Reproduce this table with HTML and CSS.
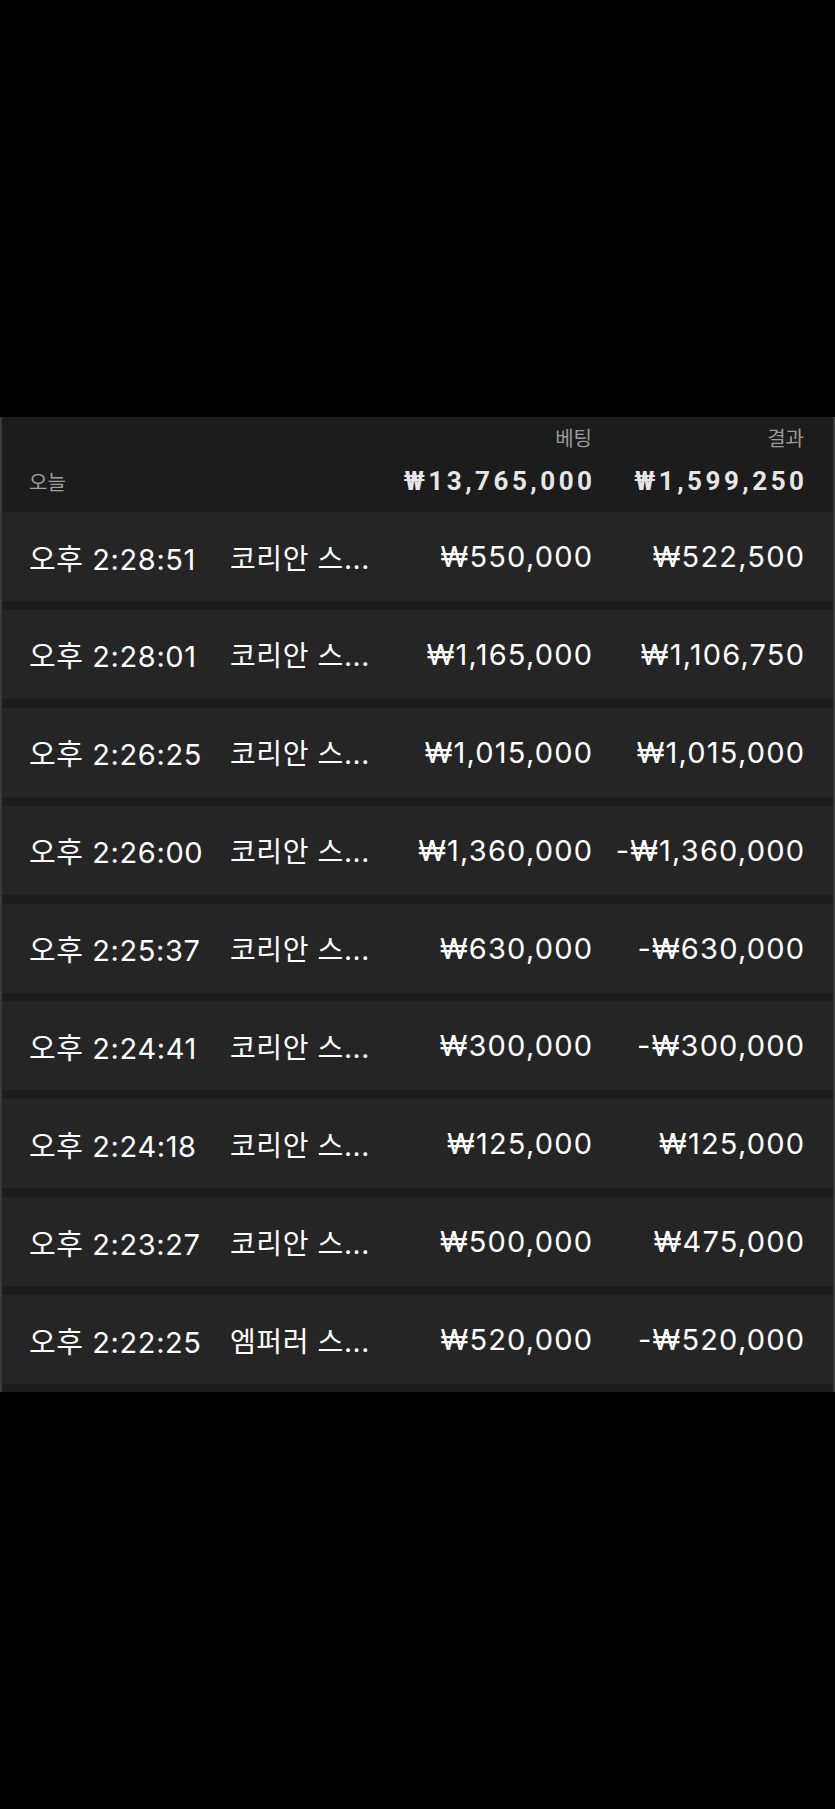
FILE: index.html
```html
<!DOCTYPE html>
<html lang="ko">
<head>
    <meta charset="UTF-8">
    <meta name="viewport" content="width=device-width, initial-scale=1.0">
    <title>베팅 내역</title>
    <link rel="stylesheet" href="styles.css">
</head>
<body>
    <div class="screen">
        <div class="history">
            <div class="summary">
                <div class="labels">
                    <span></span>
                    <span></span>
                    <span class="label">베팅</span>
                    <span class="label">결과</span>
                </div>
                <div class="totals">
                    <span class="day">오늘</span>
                    <span></span>
                    <span class="total">₩13,765,000</span>
                    <span class="total">₩1,599,250</span>
                </div>
            </div>

            <div class="row">
                <span class="time">오후 2:28:51</span>
                <span class="game">코리안 스...</span>
                <span class="amount">₩550,000</span>
                <span class="amount">₩522,500</span>
            </div>
            <div class="row">
                <span class="time">오후 2:28:01</span>
                <span class="game">코리안 스...</span>
                <span class="amount">₩1,165,000</span>
                <span class="amount">₩1,106,750</span>
            </div>
            <div class="row">
                <span class="time">오후 2:26:25</span>
                <span class="game">코리안 스...</span>
                <span class="amount">₩1,015,000</span>
                <span class="amount">₩1,015,000</span>
            </div>
            <div class="row">
                <span class="time">오후 2:26:00</span>
                <span class="game">코리안 스...</span>
                <span class="amount">₩1,360,000</span>
                <span class="amount">-₩1,360,000</span>
            </div>
            <div class="row">
                <span class="time">오후 2:25:37</span>
                <span class="game">코리안 스...</span>
                <span class="amount">₩630,000</span>
                <span class="amount">-₩630,000</span>
            </div>
            <div class="row">
                <span class="time">오후 2:24:41</span>
                <span class="game">코리안 스...</span>
                <span class="amount">₩300,000</span>
                <span class="amount">-₩300,000</span>
            </div>
            <div class="row">
                <span class="time">오후 2:24:18</span>
                <span class="game">코리안 스...</span>
                <span class="amount">₩125,000</span>
                <span class="amount">₩125,000</span>
            </div>
            <div class="row">
                <span class="time">오후 2:23:27</span>
                <span class="game">코리안 스...</span>
                <span class="amount">₩500,000</span>
                <span class="amount">₩475,000</span>
            </div>
            <div class="row">
                <span class="time">오후 2:22:25</span>
                <span class="game">엠퍼러 스...</span>
                <span class="amount">₩520,000</span>
                <span class="amount">-₩520,000</span>
            </div>
        </div>
    </div>
</body>
</html>
```

FILE: styles.css
```css
body {
    font-family: Inter, 'Noto Sans CJK KR', sans-serif;
    margin: 0;
    padding: 0;
    background-color: #000000;
    color: #ffffff;
}

.screen {
    padding-top: 417px;
    height: 1392px;
}

.history {
    background-color: #1c1c1c;
    border-left: 2px solid #3a3a3a;
    border-right: 2px solid #3a3a3a;
    padding-bottom: 8px;
}

.labels,
.totals,
.row {
    display: grid;
    grid-template-columns: 201px 1fr 192px 212px;
    padding: 0 29px 0 27px;
}

.summary {
    padding: 6px 0 14px;
}
.labels {
    height: 24px;
    align-items: center;
}
.label {
    text-align: right;
    color: #9a9a9a;
    font-size: 20px;
}
.totals {
    margin-top: 19px;
    height: 32px;
    align-items: baseline;
}
.day {
    color: #a0a0a0;
    font-size: 20px;
}
.total {
    font-family: Roboto, 'Noto Sans CJK KR', sans-serif;
    text-align: right;
    color: #e6e6e6;
    font-size: 26px;
    font-weight: 700;
    letter-spacing: 3.5px;
    margin-right: -3.5px;
}

.row {
    height: 89px;
    align-items: center;
    background-color: #252525;
    font-size: 29px;
    margin-bottom: 8.9px;
}
.row:last-child {
    margin-bottom: 0;
}
.time {
    letter-spacing: 0.6px;
}
.game {
    font-size: 28px;
    letter-spacing: 0.6px;
    white-space: nowrap;
    overflow: hidden;
}
.amount {
    text-align: right;
    letter-spacing: 1.2px;
    margin-right: -1.2px;
}
```
